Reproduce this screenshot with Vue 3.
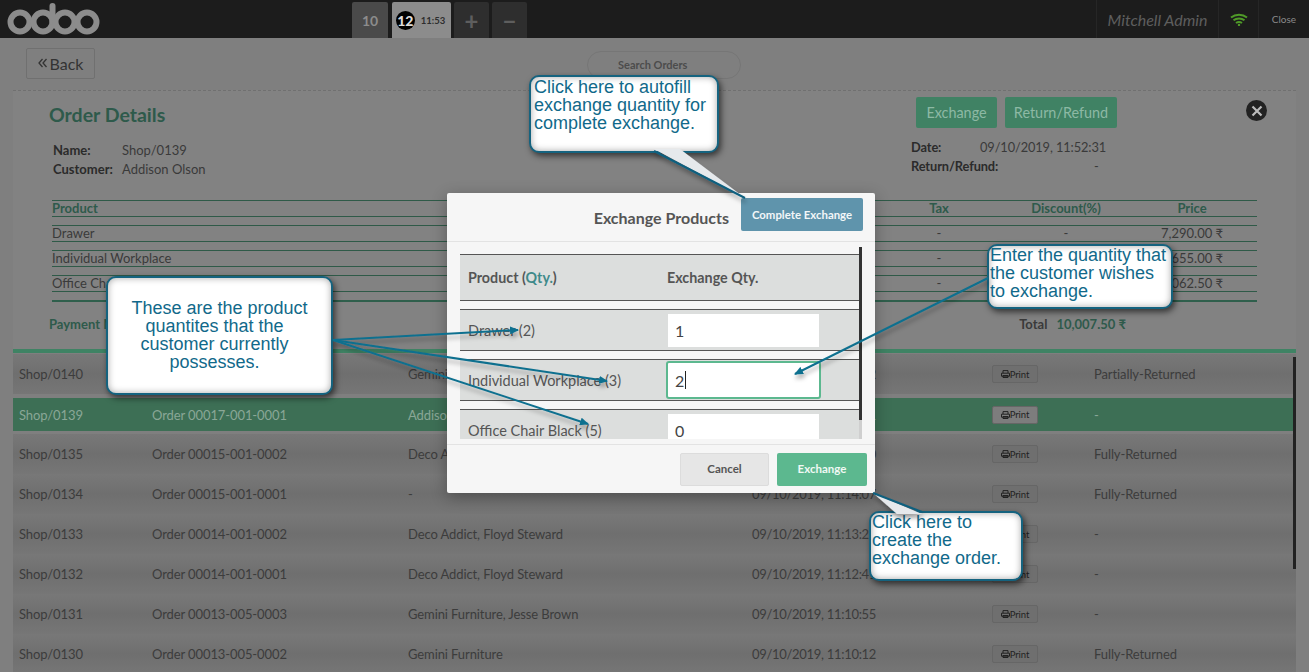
<template>
  <div class="screen">
    <header class="topbar">
      <svg class="logo" width="100" height="38" viewBox="0 0 100 38">
        <g fill="none" stroke="#8c8c8c" stroke-width="6">
          <circle cx="20" cy="22" r="9.5" />
          <circle cx="43" cy="22" r="9.5" />
          <path d="M52.500 22V6" stroke-linecap="round" />
          <circle cx="65" cy="22" r="9.5" />
          <circle cx="87" cy="22" r="9.5" />
        </g>
      </svg>
      <div class="tabs">
        <span class="tab tab-num">10</span>
        <span class="tab tab-active"><b class="badge">12</b><small>11:53</small></span>
        <span class="tab tab-tool">+</span>
        <span class="tab tab-tool">−</span>
      </div>
      <div class="topbar-right">
        <span class="user">Mitchell Admin</span>
        <span class="wifi">
          <svg width="18" height="13" viewBox="0 0 18 13">
            <g fill="none" stroke="#4f9a28" stroke-width="2">
              <path d="M1 4.5C5.5 .8 12.5 .8 17 4.5" />
              <path d="M3.5 7.3C6.5 4.8 11.5 4.8 14.5 7.3" />
              <path d="M6 10C7.8 8.7 10.2 8.7 12 10" />
            </g>
            <circle cx="9" cy="12" r="1.2" fill="#4f9a28" />
          </svg>
        </span>
        <span class="close">Close</span>
      </div>
    </header>

    <div class="toolbar">
      <button class="back">
        <svg width="9" height="10" viewBox="0 0 9 10">
          <path d="M4.5 1L1 5L4.5 9M8.5 1L5 5L8.5 9" fill="none" stroke="#333" stroke-width="1.3" />
        </svg>
        Back
      </button>
      <div class="search">Search Orders</div>
    </div>

    <section class="details">
      <div class="details-head">
        <div class="details-left">
          <h2>Order Details</h2>
          <div class="info info-left">
            <b>Name:</b><span>Shop/0139</span>
            <b>Customer:</b><span>Addison Olson</span>
          </div>
        </div>
        <div class="details-right">
          <div class="actions">
            <button class="green-btn exchange-btn">Exchange</button>
            <button class="green-btn refund-btn">Return/Refund</button>
          </div>
          <div class="info info-right">
            <b>Date:</b><span>09/10/2019, 11:52:31</span>
            <b>Return/Refund:</b><span class="dash">-</span>
          </div>
        </div>
        <span class="dismiss">
          <svg width="12" height="12" viewBox="0 0 12 12"><path d="M1.5 1.5L10.5 10.5M10.5 1.5L1.5 10.5" stroke="#bbb" stroke-width="2.2" /></svg>
        </span>
      </div>

      <div class="lines">
        <div class="line line-head">
          <span>Product</span><span>Tax</span><span>Discount(%)</span><span>Price</span>
        </div>
        <div v-for="l in lines" :key="l.name" class="line">
          <span>{{ l.name }}</span><span>-</span><span>-</span><span>{{ l.price }}</span>
        </div>
      </div>

      <div class="totals">
        <b class="pay">Payment Mode</b>
        <b class="total-label">Total</b>
        <b class="total-value">10,007.50 ₹</b>
      </div>
    </section>

    <div class="orders">
      <div v-for="o in orders" :key="o.ref" class="order" :class="{ selected: o.selected }">
        <span>{{ o.ref }}</span>
        <span>{{ o.no }}</span>
        <span>{{ o.customer }}</span>
        <span class="order-date">{{ o.date }}</span>
        <span>
          <em class="print">
            <svg width="9" height="8" viewBox="0 0 9 8">
              <path d="M2 3V.6h5V3M.5 3.2h8v3h-8zM2 5.5h5v2H2z" fill="none" stroke="#222" stroke-width="1" />
            </svg>Print
          </em>
        </span>
        <span>{{ o.status }}</span>
      </div>
      <div class="orders-scroll"></div>
    </div>

    <div class="modal">
      <div class="modal-head">
        <h3>Exchange Products</h3>
        <button class="complete">Complete Exchange</button>
      </div>
      <div class="modal-body">
        <div class="qty-head">
          <span>Product (<i>Qty.</i>)</span>
          <span>Exchange Qty.</span>
        </div>
        <div v-for="q in qtys" :key="q.name" class="qty-row">
          <span>{{ q.name }} ({{ q.max }})</span>
          <div class="qty-input" :class="{ focused: q.focus }">{{ q.value }}<s v-if="q.focus"></s></div>
        </div>
        <div class="modal-scroll"></div>
      </div>
      <div class="modal-foot">
        <button class="cancel">Cancel</button>
        <button class="confirm">Exchange</button>
      </div>
    </div>

    <div class="note note-autofill">Click here to autofill exchange quantity for complete exchange.</div>
    <div class="note note-owned">These are the product<br />quantites that the&nbsp;&nbsp;<br />customer currently&nbsp;&nbsp;<br />possesses.&nbsp;&nbsp;</div>
    <div class="note note-enter">Enter the quantity that the customer wishes to exchange.</div>
    <div class="note note-create">Click here to create the exchange order.</div>

    <!-- callout tails and arrows -->
    <svg class="pointers" width="1309" height="672" viewBox="0 0 1309 672">
      <defs>
        <filter id="soft" x="-20%" y="-50%" width="140%" height="200%">
          <feDropShadow dx="1" dy="4" stdDeviation="2" flood-color="#000" flood-opacity=".3" />
        </filter>
        <marker id="tip" markerUnits="userSpaceOnUse" markerWidth="9" markerHeight="8" refX="8" refY="4" orient="auto">
          <path d="M0 0L9 4L0 8z" fill="#11708f" />
        </marker>
      </defs>
      <g filter="url(#soft)" fill="none" stroke="#11708f" stroke-width="2">
        <path d="M333 340L518 330" marker-end="url(#tip)" />
        <path d="M333 340L607 381" marker-end="url(#tip)" />
        <path d="M333 340L588 424" marker-end="url(#tip)" />
        <path d="M988 278L795 374" marker-end="url(#tip)" />
      </g>
      <g filter="url(#soft)">
        <path d="M654 149H680L745 198z" fill="#e6e9ec" />
        <path d="M654 151L745 198" fill="none" stroke="#11607f" stroke-width="2" />
        <path d="M897 514L873 493L922 514z" fill="#e6e9ec" />
        <path d="M873 493L922 512" fill="none" stroke="#11607f" stroke-width="2" />
      </g>
    </svg>
  </div>
</template>

<script setup>
const lines = [
  { name: 'Drawer', price: '7,290.00 ₹' },
  { name: 'Individual Workplace', price: '1,655.00 ₹' },
  { name: 'Office Chair Black', price: '1,062.50 ₹' }
]

const qtys = [
  { name: 'Drawer', max: 2, value: 1 },
  { name: 'Individual Workplace', max: 3, value: 2, focus: true },
  { name: 'Office Chair Black', max: 5, value: 0 }
]

const orders = [
  { ref: 'Shop/0140', no: 'Order 00017-001-0002', customer: 'Gemini Furniture', date: '09/10/2019, 11:53:02', status: 'Partially-Returned' },
  { ref: 'Shop/0139', no: 'Order 00017-001-0001', customer: 'Addison Olson', date: '09/10/2019, 11:52:31', status: '-', selected: true },
  { ref: 'Shop/0135', no: 'Order 00015-001-0002', customer: 'Deco Addict', date: '09/10/2019, 11:14:40', status: 'Fully-Returned' },
  { ref: 'Shop/0134', no: 'Order 00015-001-0001', customer: '-', date: '09/10/2019, 11:14:07', status: 'Fully-Returned' },
  { ref: 'Shop/0133', no: 'Order 00014-001-0002', customer: 'Deco Addict, Floyd Steward', date: '09/10/2019, 11:13:21', status: '-' },
  { ref: 'Shop/0132', no: 'Order 00014-001-0001', customer: 'Deco Addict, Floyd Steward', date: '09/10/2019, 11:12:41', status: '-' },
  { ref: 'Shop/0131', no: 'Order 00013-005-0003', customer: 'Gemini Furniture, Jesse Brown', date: '09/10/2019, 11:10:55', status: '-' },
  { ref: 'Shop/0130', no: 'Order 00013-005-0002', customer: 'Gemini Furniture', date: '09/10/2019, 11:10:12', status: 'Fully-Returned' }
]
</script>

<style>
html,
body {
  margin: 0;
  background: #7f7f7f;
  overflow: hidden;
}
</style>

<style scoped>
.screen {
  position: relative;
  width: 1309px;
  height: 672px;
  overflow: hidden;
  background: #7f7f7f;
  font-family: Lato, "Liberation Sans", sans-serif;
  font-size: 13px;
  color: #3a3a3a;
}
button {
  font-family: inherit;
  border: 0;
}

.topbar {
  display: flex;
  height: 38px;
  background: #1c1c1c;
}
.logo {
  flex: none;
}
.tabs {
  display: flex;
  gap: 3px;
  margin-left: 252px;
  padding-top: 2px;
}
.tab {
  display: flex;
  align-items: center;
  justify-content: center;
  border-radius: 2px 2px 0 0;
  font-weight: 700;
}
.tab-num {
  width: 36px;
  margin-right: 1px;
  background: #4a4a4a;
  color: #8c8c8c;
  font-size: 14px;
}
.tab-active {
  width: 59px;
  gap: 6px;
  padding-right: 2px;
  box-sizing: border-box;
  background: #8c8c8c;
}
.tab-active small {
  font-size: 9.5px;
  color: #2e2e2e;
}
.badge {
  width: 19px;
  height: 19px;
  line-height: 19px;
  border-radius: 50%;
  background: #000;
  color: #ddd;
  text-align: center;
  font-size: 14px;
}
.tab-tool {
  width: 35px;
  background: #2e2e2e;
  color: #5e5e5e;
  font-size: 24px;
}
.topbar-right {
  display: flex;
  margin-left: auto;
  height: 38px;
  align-items: stretch;
}
.topbar-right > span {
  display: flex;
  align-items: center;
  justify-content: center;
  border-left: 1px solid #262626;
}
.user {
  width: 121px;
  font-size: 16px;
  font-style: italic;
  color: #5e5e5e;
}
.wifi {
  width: 39px;
}
.close {
  width: 50px;
  font-size: 10px;
  color: #8a8a8a;
}

.toolbar {
  position: relative;
  height: 52px;
  display: flex;
}
.back {
  display: flex;
  align-items: center;
  justify-content: center;
  gap: 3px;
  width: 69px;
  height: 31px;
  margin: 10px 0 0 26px;
  padding: 0 0 1px;
  background: #7f7f7f;
  border: 1px solid #707070;
  border-radius: 2px;
  font-size: 16px;
  color: #333;
}
.search {
  width: 154px;
  height: 28px;
  margin: 13px 0 0 492px;
  padding-left: 30px;
  line-height: 26px;
  border: 1px solid #767676;
  border-radius: 14px;
  box-sizing: border-box;
  font-size: 11px;
  font-weight: 700;
  color: #4c4c4c;
}

.details {
  height: 259px;
  margin: 0 13px;
  box-sizing: border-box;
  border-top: 1px dashed #707070;
  background: #828282;
  padding: 0 39px;
}
.details-head {
  position: relative;
  display: flex;
  justify-content: space-between;
  height: 109px;
}
.details-left {
  margin-left: -3px;
}
h2 {
  margin: 12px 0 14px;
  font-size: 19.5px;
  line-height: 24px;
  color: #2e5a4b;
}
.info {
  display: grid;
  font-size: 13px;
  line-height: 19px;
  color: #3a3a3a;
}
.info b {
  color: #2b2b2b;
}
.info-left {
  grid-template-columns: 69px auto;
  margin-left: 4px;
}
.details-right {
  width: 346px;
}
.actions {
  display: flex;
  gap: 8px;
  margin: 6px 0 0 5px;
}
.green-btn {
  height: 31px;
  padding: 0;
  background: #408264;
  border-radius: 2px;
  color: #8db9a4;
  font-size: 14.4px;
}
.exchange-btn {
  width: 81px;
}
.refund-btn {
  width: 112px;
}
.info-right {
  grid-template-columns: 69px auto;
  margin-top: 10px;
  font-size: 12.8px;
  letter-spacing: -.1px;
}
.info-right .dash {
  padding-left: 114px;
}
.info-right b:nth-of-type(2) {
  white-space: nowrap;
}
.dismiss {
  position: absolute;
  top: 9px;
  right: -10px;
  display: flex;
  align-items: center;
  justify-content: center;
  width: 21px;
  height: 21px;
  border-radius: 50%;
  background: #222;
}

.lines {
  border-bottom: 2px solid #2f5f4c;
  padding-bottom: 8px;
}
.line {
  display: grid;
  grid-template-columns: 1fr 64px 190px 62px;
  padding-right: 34px;
  height: 15px;
  line-height: 15px;
  margin-bottom: 8px;
  border-top: 1px solid #2f5a48;
  border-bottom: 1px solid #2f5a48;
  font-size: 13px;
  white-space: nowrap;
}
.line:last-child {
  margin-bottom: 0;
}
.line span:not(:first-child) {
  display: flex;
  justify-content: center;
}
.line-head {
  font-weight: 700;
  color: #2e5a4b;
}
.totals {
  position: relative;
  display: flex;
  margin-top: 13px;
  font-size: 13px;
  line-height: 18px;
}
.pay {
  margin-left: -3px;
  color: #2e5a4b;
}
.total-label {
  margin-left: auto;
  margin-right: 9px;
}
.total-value {
  margin-right: 131px;
  color: #2e5a4b;
}

.orders {
  position: relative;
  margin: 0 13px;
  padding-top: 1px;
  border-top: 4px solid #3f8364;
}
.order {
  display: grid;
  grid-template-columns: 133px 256px 344px 240px 102px auto;
  align-items: center;
  height: 40px;
  padding-left: 6px;
  background: linear-gradient(#787878, #6f6f6f 50%, #767676);
  white-space: nowrap;
  letter-spacing: -.1px;
  color: #3c3c3c;
}
.order-date {
  letter-spacing: -.3px;
}
.order.selected {
  background: #3d6f55;
  height: 33px;
  margin: 4px 0 3px;
  color: #8aa797;
}
.print {
  display: inline-flex;
  align-items: center;
  justify-content: center;
  width: 46px;
  height: 18px;
  box-sizing: border-box;
  background: #6f6f6f;
  border: 1px solid #666;
  border-radius: 2px;
  font-style: normal;
  font-size: 9.5px;
  color: #222;
  vertical-align: middle;
}
.selected .print {
  background: #7d7d7d;
}
.orders-scroll {
  position: absolute;
  top: 4px;
  right: 0;
  width: 3px;
  height: 212px;
  background: #222;
}

.modal {
  position: absolute;
  left: 447px;
  top: 193px;
  width: 428px;
  height: 300px;
  background: #f6f6f6;
  border-radius: 2px;
  box-shadow: 0 4px 16px rgba(0, 0, 0, .3);
  display: flex;
  flex-direction: column;
}
.modal-head {
  display: flex;
  justify-content: flex-end;
  height: 49px;
  box-sizing: border-box;
  border-bottom: 1px solid #e3e3e3;
  padding: 5px 12px 0 0;
}
.modal-head h3 {
  margin: 11px 12px 0 0;
  font-size: 16px;
  line-height: 18px;
  font-weight: 700;
  color: #555;
}
.complete {
  width: 122px;
  height: 33px;
  padding: 0 0 1px;
  border-radius: 2px;
  background: #5f94ac;
  color: #f2f6f8;
  font-size: 11.4px;
  font-weight: 700;
}
.modal-body {
  position: relative;
  height: 197px;
  overflow: hidden;
  margin: 0 13px;
  padding-top: 12px;
  box-sizing: border-box;
  width: 402px;
}
.qty-head,
.qty-row {
  display: grid;
  grid-template-columns: 199px 1fr;
  align-items: center;
  box-sizing: border-box;
  width: 399px;
  padding-left: 8px;
  background: #dcdedd;
  border-top: 1px solid #555;
  border-bottom: 1px solid #555;
  color: #555;
}
.qty-head {
  height: 47px;
  margin-bottom: 8px;
  font-size: 14.3px;
  font-weight: 700;
}
.qty-head i {
  font-style: normal;
  color: #3f8a8a;
}
.qty-row {
  height: 42px;
  margin-bottom: 8px;
  font-size: 14.5px;
}
.qty-input {
  display: flex;
  align-items: center;
  width: 151px;
  height: 33px;
  box-sizing: border-box;
  margin-left: 1px;
  padding-left: 7px;
  background: #fff;
  font-size: 16px;
  color: #444;
}
.qty-input.focused {
  width: 155px;
  height: 38px;
  margin-left: -1px;
  border: 2px solid #5cb88f;
  border-radius: 3px;
}
.qty-input s {
  width: 1px;
  height: 18px;
  margin-left: 1px;
  background: #222;
}
.modal-scroll {
  position: absolute;
  top: 5px;
  right: 0;
  width: 3px;
  height: 192px;
  background: linear-gradient(#333 173px, #cfcfcf 173px);
}
.modal-foot {
  display: flex;
  justify-content: flex-end;
  gap: 8px;
  height: 49px;
  box-sizing: border-box;
  margin-top: 5px;
  padding: 8px 8px 0 0;
  border-top: 1px solid #e3e3e3;
}
.cancel,
.confirm {
  height: 33px;
  border-radius: 2px;
  padding: 0 0 2px;
  font-size: 11.5px;
  font-weight: 700;
}
.cancel {
  width: 89px;
  background: #e6e6e6;
  border: 1px solid #dcdcdc;
  color: #555;
}
.confirm {
  width: 90px;
  background: #5cb88f;
  color: #f0f8f4;
}

.pointers {
  position: absolute;
  left: 0;
  top: 0;
}
.note {
  position: absolute;
  box-sizing: border-box;
  background: #fff;
  border: 2px solid #15637f;
  border-radius: 10px;
  box-shadow: inset 0 0 7px rgba(0, 0, 0, .35), 2px 3px 6px rgba(0, 0, 0, .6);
  font-family: "Liberation Sans", Arial, sans-serif;
  font-size: 18px;
  line-height: 18px;
  color: #11698a;
}
.note-autofill {
  left: 529px;
  top: 75px;
  width: 190px;
  height: 78px;
  padding: 1px 3px;
}
.note-owned {
  left: 106px;
  top: 276px;
  width: 227px;
  height: 119px;
  padding: 21px 11px;
  text-align: center;
}
.note-enter {
  left: 987px;
  top: 244px;
  width: 186px;
  height: 65px;
  padding: 0 1px;
}
.note-create {
  left: 869px;
  top: 511px;
  width: 154px;
  height: 70px;
  padding: 0 1px;
}
</style>
